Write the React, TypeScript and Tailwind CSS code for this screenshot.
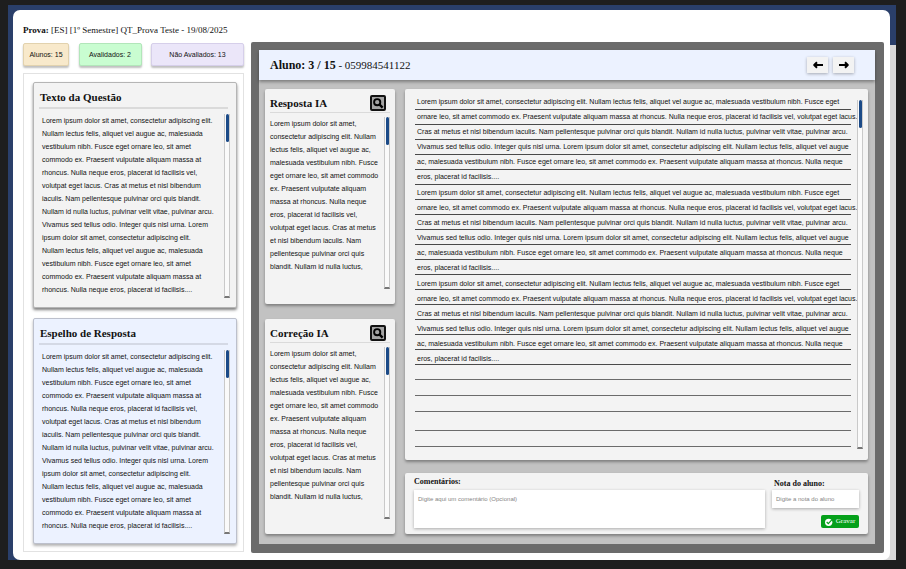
const LEFT_LINES = [
  "Lorem ipsum dolor sit amet, consectetur adipiscing elit.",
  "Nullam lectus felis, aliquet vel augue ac, malesuada",
  "vestibulum nibh. Fusce eget ornare leo, sit amet",
  "commodo ex. Praesent vulputate aliquam massa at",
  "rhoncus. Nulla neque eros, placerat id facilisis vel,",
  "volutpat eget lacus. Cras at metus et nisl bibendum",
  "iaculis. Nam pellentesque pulvinar orci quis blandit.",
  "Nullam id nulla luctus, pulvinar velit vitae, pulvinar arcu.",
  "Vivamus sed tellus odio. Integer quis nisl urna. Lorem",
  "ipsum dolor sit amet, consectetur adipiscing elit.",
  "Nullam lectus felis, aliquet vel augue ac, malesuada",
  "vestibulum nibh. Fusce eget ornare leo, sit amet",
  "commodo ex. Praesent vulputate aliquam massa at",
  "rhoncus. Nulla neque eros, placerat id facilisis....",
].join("\n");

const AI_TEXT = [
  "Lorem ipsum dolor sit amet,",
  "consectetur adipiscing elit. Nullam",
  "lectus felis, aliquet vel augue ac,",
  "malesuada vestibulum nibh. Fusce",
  "eget ornare leo, sit amet commodo",
  "ex. Praesent vulputate aliquam",
  "massa at rhoncus. Nulla neque",
  "eros, placerat id facilisis vel,",
  "volutpat eget lacus. Cras at metus",
  "et nisl bibendum iaculis. Nam",
  "pellentesque pulvinar orci quis",
  "blandit. Nullam id nulla luctus,",
].join("\n");

const ANSWER_LINES = [
  "Lorem ipsum dolor sit amet, consectetur adipiscing elit. Nullam lectus felis, aliquet vel augue ac, malesuada vestibulum nibh. Fusce eget",
  "ornare leo, sit amet commodo ex. Praesent vulputate aliquam massa at rhoncus. Nulla neque eros, placerat id facilisis vel, volutpat eget lacus.",
  "Cras at metus et nisl bibendum iaculis. Nam pellentesque pulvinar orci quis blandit. Nullam id nulla luctus, pulvinar velit vitae, pulvinar arcu.",
  "Vivamus sed tellus odio. Integer quis nisl urna. Lorem ipsum dolor sit amet, consectetur adipiscing elit. Nullam lectus felis, aliquet vel augue",
  "ac, malesuada vestibulum nibh. Fusce eget ornare leo, sit amet commodo ex. Praesent vulputate aliquam massa at rhoncus. Nulla neque",
  "eros, placerat id facilisis....",
];

const BLOCK_LEADING = ["leading-[14px]", "leading-[16px]", "leading-[18px]"];

const SERIF = "font-['Liberation_Serif',serif]";

function ScrollTrack() {
  return (
    <div className="w-[6px] shrink-0 self-stretch border-x border-b-2 border-x-[#c9c9c9] border-b-[#777777] bg-[#fafafa]">
      <div className="mx-auto h-[28px] w-[3px] rounded-sm bg-[#1b4a87]" />
    </div>
  );
}

function QuestionCard({ title, tone }: { title: string; tone: string }) {
  return (
    <section className={`flex flex-1 flex-col rounded-xs border pt-[7px] pr-[6px] pb-[9px] pl-[5px] ${tone}`}>
      <h2 className={`mr-[2px] border-b-2 border-black/10 pb-[2px] pl-[1px] text-[11px] leading-[15px] font-bold ${SERIF}`}>{title}</h2>
      <div className="mt-[5px] flex flex-1 justify-between pl-[3px]">
        <p className="text-[7px] leading-[13px] whitespace-pre">{LEFT_LINES}</p>
        <ScrollTrack />
      </div>
    </section>
  );
}

function SearchIcon() {
  return (
    <svg viewBox="0 0 12 12" className="size-[12px]" fill="none" stroke="currentColor" aria-hidden="true">
      <circle cx="5.2" cy="5.2" r="3.1" strokeWidth="1.9" />
      <path d="M7.4 7.4L10.6 10.6" strokeWidth="2.3" />
    </svg>
  );
}

function ArrowIcon({ direction }: { direction: "left" | "right" }) {
  return (
    <svg viewBox="0 0 12 8" className="h-[8px] w-[12px]" fill="none" stroke="currentColor" strokeWidth="2" strokeLinejoin="round" aria-hidden="true">
      {direction === "left" ? <path d="M11 4H2.5M5 1.3L2.2 4L5 6.7" /> : <path d="M1 4H9.5M7 1.3L9.8 4L7 6.7" />}
    </svg>
  );
}

function AiCard({ title }: { title: string }) {
  return (
    <section className="flex flex-1 flex-col rounded-xs bg-[#f3f3f3] pt-[6px] pr-[5px] pb-[15px] pl-[5px] shadow-[0_2px_3px_rgba(0,0,0,0.35)]">
      <div className="flex items-center justify-between border-b border-black/10 pr-[4px] pb-px">
        <h2 className={`text-[11px] leading-[15px] font-bold ${SERIF}`}>{title}</h2>
        <button
          type="button"
          aria-label={`Ampliar ${title}`}
          className="flex size-[16px] items-center justify-center rounded-xs border-2 border-[#111111] bg-[#a3a3a3] text-black"
        >
          <SearchIcon />
        </button>
      </div>
      <div className="mt-[4px] flex flex-1 justify-between">
        <p className="text-[7px] leading-[13px] whitespace-pre">{AI_TEXT}</p>
        <ScrollTrack />
      </div>
    </section>
  );
}

function CheckBadge() {
  return (
    <svg viewBox="0 0 24 24" className="size-[8px]" aria-hidden="true">
      <circle cx="11" cy="13" r="11" fill="white" />
      <path d="M5 12l5 5L21 5" fill="none" stroke="#05a01a" strokeWidth="3.5" />
    </svg>
  );
}

export default function App() {
  return (
    <div className="flex min-h-screen flex-col bg-[#1e1e1e] pt-[5px] pr-[10px] pb-[9px] pl-[8px] font-['Liberation_Sans',Arial,sans-serif] text-[#111111]">
      <div className="flex flex-1 bg-[#2a3f6a] bg-[linear-gradient(#d9d9d9,#d9d9d9)] bg-[length:14px_calc(100%-40px)] bg-right-bottom bg-no-repeat pt-[5px] pr-[6px] pl-[5px]">
        <main className="flex min-w-0 flex-1 flex-col rounded-[7px] bg-white pt-[12px] pr-[6px] pb-[7px] pl-[10px]">
          <h1 className={`text-[9px] leading-[16px] ${SERIF}`}>
            <b>Prova:</b> [ES] [1º Semestre] QT_Prova Teste - 19/08/2025
          </h1>
          <div className="mt-[4px] flex flex-1 gap-[7px]">
            <div className="flex w-[221px] shrink-0 flex-col pt-[1px] pb-[1px]">
              <div className="flex justify-between text-center text-[7px] leading-[21px]">
                <div className="w-[46px] rounded-xs border border-[#e2d2ae] bg-[#f8e9cb] shadow-[0_2px_2px_rgba(0,0,0,0.25)]">Alunos: 15</div>
                <div className="w-[63px] rounded-xs border border-[#b2e6ba] bg-[#c9fdd1] shadow-[0_2px_2px_rgba(0,0,0,0.25)]">Avalidados: 2</div>
                <div className="w-[93px] rounded-xs border border-[#d6cfea] bg-[#ebe6f9] shadow-[0_2px_2px_rgba(0,0,0,0.25)]">Não Avaliados: 13</div>
              </div>
              <div className="mt-[7px] flex flex-1 flex-col gap-[10px] border border-[#e2e2e2] pt-[8px] pr-[6px] pb-[7px] pl-[9px]">
                <QuestionCard
                  title="Texto da Questão"
                  tone="border-[#b5b5b5] bg-[#f3f3f3] shadow-[0_2px_3px_rgba(0,0,0,0.5)]"
                />
                <QuestionCard
                  title="Espelho de Resposta"
                  tone="border-[#bcc0cc] bg-[#ecf2ff] shadow-[0_2px_3px_rgba(0,0,0,0.3)]"
                />
              </div>
            </div>

            <div className="flex min-w-0 flex-1 flex-col rounded-xs bg-[#6b6b6b] pt-[8px] pr-[9px] pb-[9px] pl-[8px]">
              <div className="flex flex-1 flex-col bg-[#c2c2c2]">
                <header className="flex h-[30px] items-center justify-between bg-[#ecf2ff] pr-[21px] pl-[11px] shadow-[0_2px_3px_rgba(0,0,0,0.35)]">
                  <h2 className={`text-[11px] leading-[16px] ${SERIF}`}>
                    <b className="text-[12px]">Aluno: 3 / 15</b> - 059984541122
                  </h2>
                  <div className="flex gap-[5px]">
                    <button type="button" aria-label="Aluno anterior" className="flex h-[16px] w-[21px] items-center justify-center bg-[#f3f3f3] text-black shadow-[0_1px_3px_rgba(0,0,0,0.3)]">
                      <ArrowIcon direction="left" />
                    </button>
                    <button type="button" aria-label="Próximo aluno" className="flex h-[16px] w-[21px] items-center justify-center bg-[#f3f3f3] text-black shadow-[0_1px_3px_rgba(0,0,0,0.3)]">
                      <ArrowIcon direction="right" />
                    </button>
                  </div>
                </header>

                <div className="flex flex-1 gap-[10px] pt-[9px] pr-[7px] pb-[10px] pl-[6px]">
                  <div className="flex w-[130px] shrink-0 flex-col gap-[15px]">
                    <AiCard title="Resposta IA" />
                    <AiCard title="Correção IA" />
                  </div>

                  <div className="flex min-w-0 flex-1 flex-col gap-[13px]">
                    <section className="flex flex-1 justify-between rounded-xs bg-[#f3f3f3] pt-[6px] pr-[5px] pb-[11px] pl-[10px] shadow-[0_2px_3px_rgba(0,0,0,0.35)]">
                      <div className="mr-[6px] min-w-0 flex-1 text-[7px]">
                        {BLOCK_LEADING.map((leading) => (
                          <div key={leading} className={leading}>
                            {ANSWER_LINES.map((line) => (
                              <p key={line} className="h-[15px] border-b border-[#4a4a4a] pl-[2px] whitespace-nowrap">
                                {line}
                              </p>
                            ))}
                          </div>
                        ))}
                        <div className="h-[15px] border-b border-[#6b6b6b]" />
                        <div className="h-[16px] border-b border-[#6b6b6b]" />
                        <div className="h-[16px] border-b border-[#6b6b6b]" />
                        <div className="h-[19px] border-b border-[#6b6b6b]" />
                        <div className="h-[16px] border-b border-[#6b6b6b]" />
                      </div>
                      <div className="flex pt-[5px]">
                        <ScrollTrack />
                      </div>
                    </section>

                    <form className="flex gap-[7px] rounded-xs bg-[#f3f3f3] pt-[4px] pr-[9px] pb-[6px] pl-[9px] shadow-[0_2px_3px_rgba(0,0,0,0.35)]">
                      <div className="flex min-w-0 flex-1 flex-col">
                        <label htmlFor="comentarios" className={`text-[8px] leading-[10px] font-bold ${SERIF}`}>
                          Comentários:
                        </label>
                        <textarea
                          id="comentarios"
                          placeholder="Digite aqui um comentário (Opcional)"
                          className="mt-[3px] min-h-0 flex-1 resize-none bg-white px-[4px] py-[5px] text-[6px] leading-[9px] shadow-[0_1px_3px_rgba(0,0,0,0.3)] placeholder:text-[#858585]"
                        />
                      </div>
                      <div className="flex w-[87px] flex-col pt-[2px]">
                        <label htmlFor="nota" className={`pl-[2px] text-[8px] leading-[10px] font-bold ${SERIF}`}>
                          Nota do aluno:
                        </label>
                        <input
                          id="nota"
                          placeholder="Digite a nota do aluno"
                          className="mt-px h-[18px] w-full bg-white px-[4px] text-[6px] leading-[9px] shadow-[0_1px_3px_rgba(0,0,0,0.3)] placeholder:text-[#858585]"
                        />
                        <button type="button" className="mt-[7px] flex h-[13px] w-[38px] items-center justify-center gap-[3px] self-end rounded-xs bg-[#05a01a] text-[7px] leading-[9px] text-white">
                          <CheckBadge />
                          <span className={SERIF}>Gravar</span>
                        </button>
                      </div>
                    </form>
                  </div>
                </div>
              </div>
            </div>
          </div>
        </main>
      </div>
    </div>
  );
}
